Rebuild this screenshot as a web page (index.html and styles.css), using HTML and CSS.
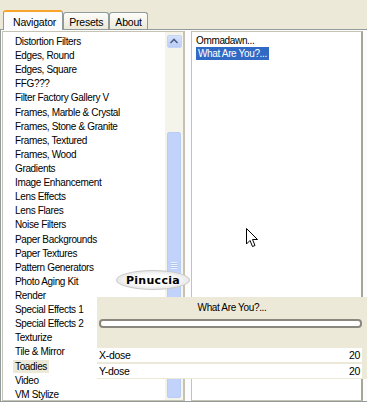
FILE: index.html
```html
<!DOCTYPE html>
<html lang="en">
<head>
    <meta charset="UTF-8">
    <title>Filters Unlimited - Navigator</title>
    <link rel="stylesheet" href="styles.css">
</head>
<body>
    <div class="window">
        <div class="tabs">
            <div class="tab active">Navigator</div>
            <div class="tab">Presets</div>
            <div class="tab">About</div>
        </div>

        <div class="panel">
            <div class="listbox categories">
                <ul class="items">
                    <li>Distortion Filters</li>
                    <li>Edges, Round</li>
                    <li>Edges, Square</li>
                    <li>FFG???</li>
                    <li>Filter Factory Gallery V</li>
                    <li>Frames, Marble &amp; Crystal</li>
                    <li>Frames, Stone &amp; Granite</li>
                    <li>Frames, Textured</li>
                    <li>Frames, Wood</li>
                    <li>Gradients</li>
                    <li>Image Enhancement</li>
                    <li>Lens Effects</li>
                    <li>Lens Flares</li>
                    <li>Noise Filters</li>
                    <li>Paper Backgrounds</li>
                    <li>Paper Textures</li>
                    <li>Pattern Generators</li>
                    <li>Photo Aging Kit</li>
                    <li>Render</li>
                    <li>Special Effects 1</li>
                    <li>Special Effects 2</li>
                    <li>Texturize</li>
                    <li>Tile &amp; Mirror</li>
                    <li><span class="current">Toadies</span></li>
                    <li>Video</li>
                    <li>VM Stylize</li>
                </ul>
                <div class="scrollbar">
                    <div class="arrow-btn">
                        <svg width="14" height="13" viewBox="0 0 14 13">
                            <path d="M3.5 8 L7 4.5 L10.5 8" fill="none" stroke="#4d6185" stroke-width="1.6"/>
                        </svg>
                    </div>
                    <div class="track"></div>
                    <div class="thumb">
                        <div class="grip"></div>
                    </div>
                </div>
            </div>

            <div class="listbox filters">
                <ul class="items">
                    <li>Ommadawn...</li>
                    <li><span class="selected">What Are You?...</span></li>
                </ul>
            </div>
        </div>

        <!-- floating preview of the filter settings -->
        <div class="dialog">
            <div class="dialog-title">What Are You?...</div>
            <div class="progress"></div>
            <div class="params">
                <div class="param"><span>X-dose</span><span>20</span></div>
                <div class="param"><span>Y-dose</span><span>20</span></div>
            </div>
        </div>

        <div class="watermark">Pinuccia</div>

        <svg class="cursor" width="13" height="20" viewBox="0 0 13 20">
            <path d="M0.5 0.5 L0.5 16 L4 12.5 L6.5 18.5 L9 17.5 L6.5 11.5 L11.5 11.5 Z" fill="#fff" stroke="#000" stroke-width="1"/>
        </svg>
    </div>
</body>
</html>
```

FILE: styles.css
```css
* {
    margin: 0;
    padding: 0;
    box-sizing: border-box;
}

body {
    font-family: 'Liberation Sans', Arial, sans-serif;
    font-size: 10px;
    letter-spacing: -0.35px;
    color: #000;
    background: #ece9d8;
}

.window {
    position: relative;
    width: 367px;
    height: 402px;
    overflow: hidden;
    padding-top: 9px;
}

.tabs {
    display: flex;
    align-items: flex-end;
    padding-left: 3px;
    height: 20px;
}

.tab {
    height: 17px;
    padding: 3px 5px 0;
    background: linear-gradient(#fdfdfb, #ece9d8);
    border: 1px solid #919b9c;
    border-bottom: none;
    border-radius: 3px 3px 0 0;
    font-size: 10.5px;
    letter-spacing: -0.2px;
}

.tab.active {
    height: 20px;
    padding: 4px 6px 0 9px;
    background: #fcfcfe;
    border-top: 2px solid #f7a42a;
    position: relative;
    z-index: 1;
    margin-bottom: -1px;
}

.panel {
    display: flex;
    height: 373px;
    border: 1px solid #919b9c;
    border-right: none;
    background: #fcfcfe;
    padding: 1px 0 0 1px;
    gap: 6px;
}

.listbox {
    background: #fff;
    border: 1px solid #c6c3b4;
}

.categories {
    display: flex;
    width: 183px;
}

.categories .items {
    flex: 1;
    padding: 3px 0 0 12px;
}

.items {
    list-style: none;
}

.items li {
    height: 14.12px;
    line-height: 14px;
    white-space: nowrap;
}

.current {
    background: #ece9d8;
    padding: 1px 2px;
    margin-left: -2px;
}

.scrollbar {
    width: 19px;
    background: #f5f4ea;
    border-right: 1px solid #c6c3b4;
    display: flex;
    flex-direction: column;
    align-items: center;
    padding-top: 3px;
}

.arrow-btn {
    width: 15px;
    height: 13px;
    background: linear-gradient(#d6e2fb, #b9cdf7);
    border: 1px solid #c5d4f5;
    border-radius: 2px;
}

.arrow-btn svg {
    display: block;
    margin: -1px 0 0 -1px;
}

.track {
    height: 84px;
}

.thumb {
    width: 14px;
    flex: 1;
    background: #c1d3fb;
    border: 1px solid #b8ccf6;
    border-radius: 2px;
    margin-bottom: 2px;
    display: flex;
    justify-content: center;
    padding-top: 129px;
}

.grip {
    width: 6px;
    height: 7px;
    background: repeating-linear-gradient(#eef3fe 0 1px, #aec2ee 1px 2px);
}

.filters {
    flex: 1;
    border-right: 2px solid #a7a594;
    padding: 3px 0 0 4px;
    margin-right: 4px;
}

.filters li {
    height: 12px;
    line-height: 12px;
}

.selected {
    display: inline-block;
    background: #316ac5;
    color: #fff;
    padding: 0 2px;
    line-height: 13px;
}

.dialog {
    position: absolute;
    left: 97px;
    top: 297px;
    width: 270px;
    height: 82px;
    background: #ece9d8;
    padding-right: 5px;
}

.dialog-title {
    height: 21px;
    line-height: 21px;
    text-align: center;
    padding-left: 5px;
}

.progress {
    height: 9px;
    margin: 1px 0 0 2px;
    background: #fff;
    border: 2px solid #8a887e;
    border-radius: 4px;
}

.params {
    margin-top: 20px;
    display: flex;
    flex-direction: column;
    gap: 2px;
}

.param {
    display: flex;
    justify-content: space-between;
    height: 14px;
    line-height: 14px;
    background: #fff;
    padding: 0 2px 0 2px;
    font-size: 10.5px;
    letter-spacing: -0.3px;
}

.watermark {
    position: absolute;
    left: 116px;
    top: 270px;
    width: 74px;
    height: 20px;
    line-height: 19px;
    text-align: center;
    border-radius: 50%;
    background: radial-gradient(ellipse at center, #fff 35%, #f0f0f0 60%, #cfcfcf 100%);
    border: 1px solid #c8c8c8;
    font-family: 'DejaVu Sans', sans-serif;
    font-weight: bold;
    font-size: 11px;
    letter-spacing: 0.3px;
}

.cursor {
    position: absolute;
    left: 246px;
    top: 228px;
}
```
